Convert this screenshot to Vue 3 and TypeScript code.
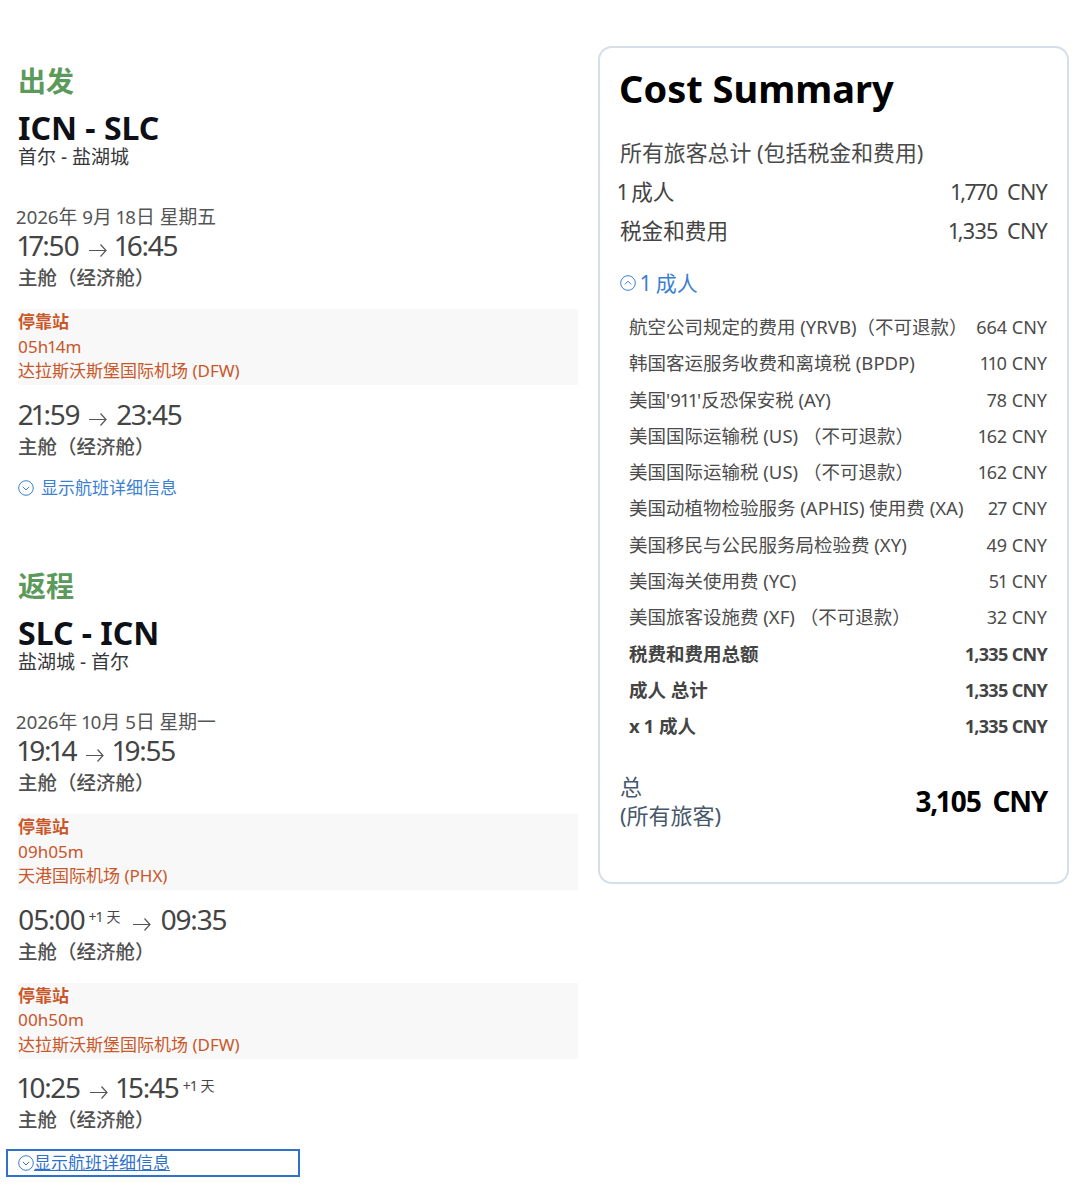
<script setup lang="ts">
interface Fee { name: string; amount: string; bold?: boolean }
interface Stop { time: string; airport: string }
interface Leg { dep: string; depDay?: boolean; arr: string; arrDay?: boolean; stop?: Stop }
interface Slice { title: string; code: string; city: string; date: string; legs: Leg[]; focused?: boolean }

const slices: Slice[] = [
  {
    title: '出发', code: 'ICN - SLC', city: '首尔 - 盐湖城', date: '2026年 9月 18日 星期五',
    legs: [
      { dep: '17:50', arr: '16:45', stop: { time: '05h14m', airport: '达拉斯沃斯堡国际机场 (DFW)' } },
      { dep: '21:59', arr: '23:45' }
    ]
  },
  {
    title: '返程', code: 'SLC - ICN', city: '盐湖城 - 首尔', date: '2026年 10月 5日 星期一', focused: true,
    legs: [
      { dep: '19:14', arr: '19:55', stop: { time: '09h05m', airport: '天港国际机场 (PHX)' } },
      { dep: '05:00', depDay: true, arr: '09:35', stop: { time: '00h50m', airport: '达拉斯沃斯堡国际机场 (DFW)' } },
      { dep: '10:25', arr: '15:45', arrDay: true }
    ]
  }
]

const fees: Fee[] = [
  { name: '航空公司规定的费用 (YRVB)（不可退款）', amount: '664 CNY' },
  { name: '韩国客运服务收费和离境税 (BPDP)', amount: '110 CNY' },
  { name: "美国'911'反恐保安税 (AY)", amount: '78 CNY' },
  { name: '美国国际运输税 (US) （不可退款）', amount: '162 CNY' },
  { name: '美国国际运输税 (US) （不可退款）', amount: '162 CNY' },
  { name: '美国动植物检验服务 (APHIS) 使用费 (XA)', amount: '27 CNY' },
  { name: '美国移民与公民服务局检验费 (XY)', amount: '49 CNY' },
  { name: '美国海关使用费 (YC)', amount: '51 CNY' },
  { name: '美国旅客设施费 (XF) （不可退款）', amount: '32 CNY' },
  { name: '税费和费用总额', amount: '1,335 CNY', bold: true },
  { name: '成人 总计', amount: '1,335 CNY', bold: true },
  { name: 'x 1 成人', amount: '1,335 CNY', bold: true }
]
</script>

<template>
  <div class="page">
    <div class="left">
      <section v-for="s in slices" :key="s.code" class="slice">
        <h2 class="title">{{ s.title }}</h2>
        <div class="code">{{ s.code }}</div>
        <div class="city">{{ s.city }}</div>
        <div class="date">{{ s.date }}</div>
        <template v-for="leg in s.legs" :key="leg.dep">
          <div class="times">
            <span class="clock">{{ leg.dep }}</span><span v-if="leg.depDay" class="day">+1 天</span>
            <svg class="arrow" width="20" height="14" viewBox="0 0 20 14" fill="none" stroke="#555" stroke-width="1.2">
              <path d="M1 7.5h17M12.5 1.5 18 7.5l-5.5 6" />
            </svg>
            <span class="clock">{{ leg.arr }}</span><span v-if="leg.arrDay" class="day">+1 天</span>
          </div>
          <div class="cabin">主舱（经济舱）</div>
          <div v-if="leg.stop" class="stop">
            <strong>停靠站</strong>
            <span>{{ leg.stop.time }}</span>
            <span>{{ leg.stop.airport }}</span>
          </div>
        </template>
        <a class="details" :class="{ focused: s.focused }" href="#">
          <svg class="chev" width="16" height="16" viewBox="0 0 16 16" fill="none" stroke="#3b7fd0" stroke-width="1">
            <circle cx="8" cy="8" r="7.3" />
            <path d="M4.8 6.8 8 10l3.2-3.2" />
          </svg>
          <span>显示航班详细信息</span>
        </a>
      </section>
    </div>

    <aside class="card">
      <h1 class="heading">Cost Summary</h1>
      <div class="sub">所有旅客总计 (包括税金和费用)</div>
      <div class="row"><span class="one">1 成人</span><span class="num">1,770&nbsp; CNY</span></div>
      <div class="row"><span>税金和费用</span><span class="num">1,335&nbsp; CNY</span></div>
      <div class="toggle">
        <svg width="16" height="16" viewBox="0 0 16 16" fill="none" stroke="#3b7fd0" stroke-width="1">
          <circle cx="8" cy="8" r="7.3" />
          <path d="M4.8 9.4 8 6.2l3.2 3.2" />
        </svg>
        <span>1 成人</span>
      </div>
      <ul class="fees">
        <li v-for="(f, i) in fees" :key="i" :class="{ bold: f.bold }">
          <span>{{ f.name }}</span><span class="amount">{{ f.amount }}</span>
        </li>
      </ul>
      <div class="total">
        <div class="total-label">总<br>(所有旅客)</div>
        <div class="total-value">3,105&nbsp; CNY</div>
      </div>
    </aside>
  </div>
</template>

<style>
html, body { background: #fff; }
</style>

<style scoped>
.page {
  width: 1080px;
  height: 1190px;
  box-sizing: border-box;
  padding-top: 46px;
  display: flex;
  align-items: flex-start;
  font-family: "Noto Sans", "Noto Sans CJK SC", sans-serif;
  font-variant-numeric: proportional-nums;
  color: #444;
  overflow: hidden;
}
.left {
  width: 578px;
  flex: none;
  padding-top: 16px;
}
.slice { margin-bottom: 67.5px; }
.slice:last-child { margin-bottom: 0; }
.title {
  margin: 0 0 0 18px;
  font-size: 28px;
  line-height: 38px;
  font-weight: 700;
  color: #5c9a5c;
}
.code {
  margin: 10px 0 0 18px;
  font-size: 32px;
  line-height: 36px;
  font-weight: 700;
  color: #0d1117;
}
.city {
  margin-left: 18px;
  font-size: 19px;
  line-height: 22px;
  color: #36383c;
}
.date {
  margin: 37px 0 0 16px;
  font-size: 18.8px;
  line-height: 24px;
  color: #555;
}
.times {
  margin: -1px 0 0 18px;
  display: flex;
  align-items: center;
  font-size: 28px;
  line-height: 34px;
  color: #444;
}
.stop + .times { margin-top: 11.5px; }
.clock { letter-spacing: -1.2px; }
.arrow { margin: 10px 8px 0 9px; }
.day {
  font-size: 14px;
  line-height: 14px;
  margin: -3px 3px 0 4px;
}
.cabin {
  margin: 2px 0 0 18px;
  font-size: 19.5px;
  line-height: 28px;
  font-weight: 500;
  color: #505050;
}
.stop {
  margin: 17px 0 0 18px;
  padding-top: 1px;
  height: 76px;
  box-sizing: border-box;
  background: #f8f8f8;
  display: flex;
  flex-direction: column;
  color: #c9572a;
  font-size: 17px;
  line-height: 24.5px;
}
.stop strong { font-weight: 700; }
.details {
  display: flex;
  align-items: center;
  gap: 7px;
  margin: 15px 0 0 18px;
  font-size: 17px;
  line-height: 24px;
  color: #3b7fd0;
  text-decoration: none;
}
.details.focused {
  width: 294px;
  height: 28px;
  box-sizing: border-box;
  margin: 15px 0 0 6px;
  padding-left: 10px;
  gap: 0;
  border: 2px solid #2f72cc;
  color: #2f72cc;
}
.details.focused span { text-decoration: underline; }
.chev { flex: none; }
.card {
  width: 471px;
  height: 838px;
  margin-left: 20px;
  box-sizing: border-box;
  flex: none;
  border: 2px solid #d5dfe9;
  border-radius: 14px;
  padding: 15px 20px 0 19px;
}
.heading {
  margin: 0;
  font-size: 38px;
  line-height: 50px;
  font-weight: 700;
  color: #000;
}
.sub {
  margin: 20px 0 0 1px;
  font-size: 21.9px;
  line-height: 39px;
  color: #4a4a4a;
}
.row {
  display: flex;
  justify-content: space-between;
  margin-left: 1px;
  font-size: 21.6px;
  line-height: 39px;
  color: #444;
}
.one { margin-left: -2px; word-spacing: -2px; }
.num { letter-spacing: -0.8px; }
.toggle {
  display: flex;
  align-items: center;
  gap: 5px;
  margin: 15px 0 0 1px;
  font-size: 21px;
  line-height: 36px;
  color: #3b7fd0;
}
.fees {
  list-style: none;
  margin: 8px 0 0 0;
  padding: 0 0 0 10px;
}
.fees li {
  display: flex;
  justify-content: space-between;
  font-size: 18.5px;
  line-height: 36.3px;
  white-space: nowrap;
  color: #4c4c4c;
}
.amount { font-size: 18px; }
.fees li.bold {
  font-weight: 700;
  color: #444;
}
.fees li.bold .amount { letter-spacing: -0.7px; }
.total {
  display: flex;
  justify-content: space-between;
  align-items: center;
  margin: 27px 0 0 1px;
}
.total-label {
  font-size: 22px;
  line-height: 29px;
  color: #47586a;
}
.total-value {
  font-size: 28px;
  line-height: 36px;
  font-weight: 700;
  letter-spacing: -1.3px;
  color: #000;
}
</style>
